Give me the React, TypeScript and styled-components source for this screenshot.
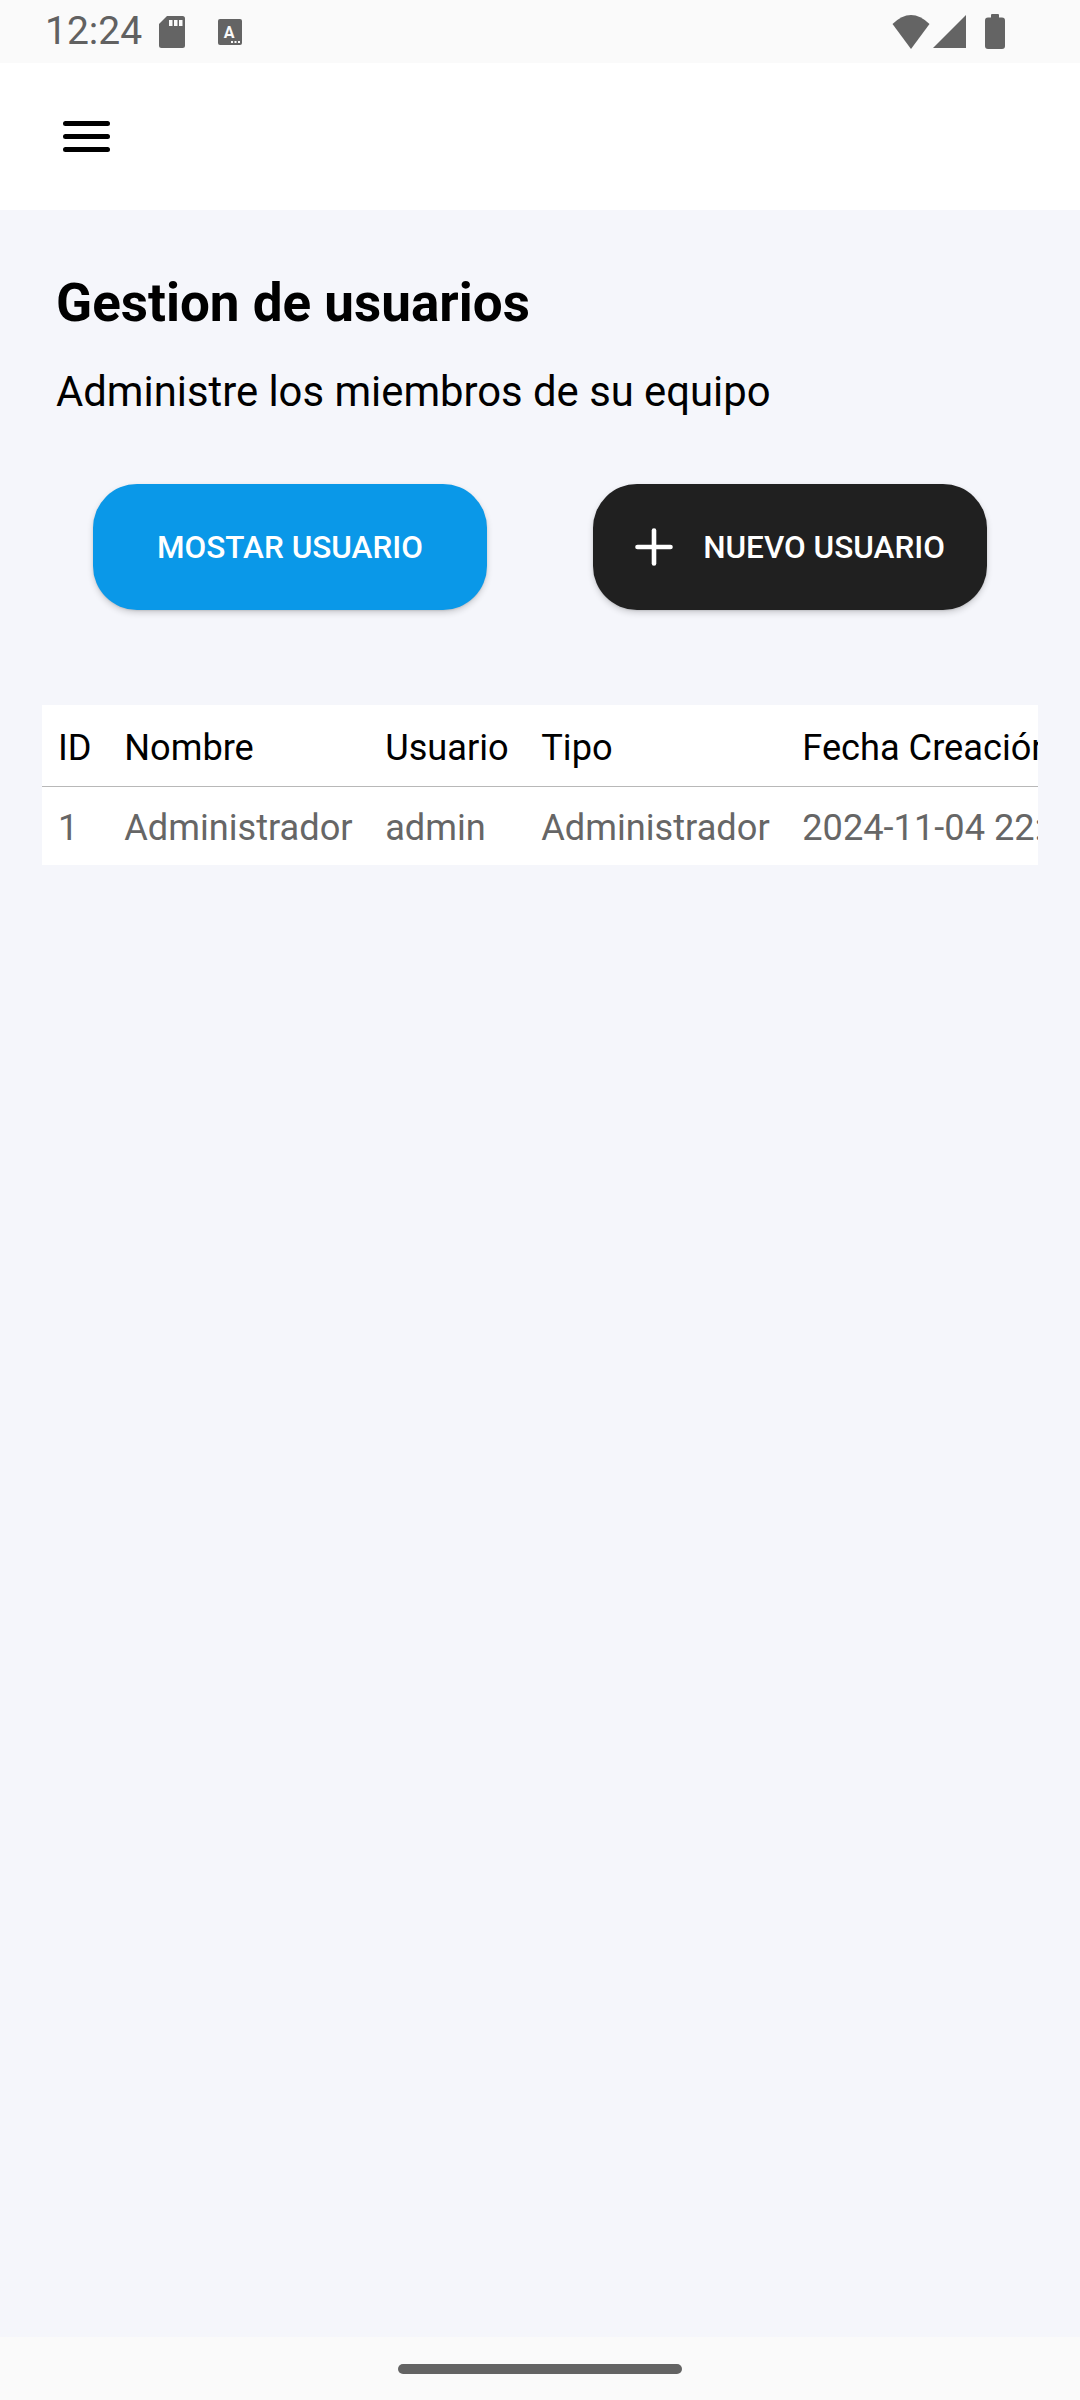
import React from "react";
import styled, { createGlobalStyle } from "styled-components";

const GlobalStyle = createGlobalStyle`
  html, body {
    margin: 0;
    padding: 0;
    background: #f5f6fb;
    font-family: Roboto, "Noto Sans", sans-serif;
  }
  * { box-sizing: border-box; }
`;

const Screen = styled.div`
  display: flex;
  flex-direction: column;
  height: 100vh;
  min-height: 2400px;
  background: #f5f6fb;
`;

const StatusBar = styled.div`
  height: 63px;
  flex: none;
  background: #fafafa;
  display: flex;
  align-items: center;
  padding: 0 75px 0 45px;
  color: #646464;
`;

const Time = styled.span`
  font-family: Roboto, sans-serif;
  font-size: 39px;
  line-height: 1;
  color: #616161;
  margin-right: 17px;
`;

const StatusLeft = styled.div`
  display: flex;
  align-items: center;
`;

const StatusRight = styled.div`
  margin-left: auto;
  display: flex;
  align-items: center;
  gap: 3px;
`;

const StatusIcon = styled.svg<{ $ml?: number }>`
  display: block;
  fill: #646464;
  margin-left: ${(p) => p.$ml ?? 0}px;
`;

const AppBar = styled.header`
  height: 147px;
  flex: none;
  background: #ffffff;
  display: flex;
  align-items: center;
  padding-left: 63px;
`;

const MenuButton = styled.button`
  border: 0;
  background: transparent;
  padding: 0;
  display: flex;
  cursor: pointer;
`;

const Main = styled.main`
  flex: 1;
  display: flex;
  flex-direction: column;
  padding: 61px 42px 0;
`;

const Title = styled.h1`
  margin: 0 0 0 14px;
  font-family: Roboto, sans-serif;
  font-weight: 700;
  font-size: 53px;
  line-height: 64px;
  color: #000;
`;

const Subtitle = styled.p`
  margin: 32px 0 0 14px;
  font-family: Roboto, sans-serif;
  font-weight: 400;
  font-size: 41.8px;
  line-height: 50px;
  color: #000;
`;

const ButtonRow = styled.div`
  display: flex;
  margin: 67px -2px 0;
`;

const ButtonCell = styled.div`
  flex: 1;
  display: flex;
  justify-content: center;
`;

const ActionButton = styled.button<{ $variant: "primary" | "dark" }>`
  width: 394px;
  height: 126px;
  border: 0;
  border-radius: 44px;
  background: ${(p) => (p.$variant === "primary" ? "#0a98e8" : "#202020")};
  color: #fff;
  display: flex;
  align-items: center;
  justify-content: center;
  gap: 30px;
  font-family: Roboto, sans-serif;
  font-weight: 500;
  font-size: 31.5px;
  letter-spacing: 0;
  text-transform: uppercase;
  box-shadow: 0 3px 6px rgba(0, 0, 0, 0.16), 0 1px 2px rgba(0, 0, 0, 0.1);
  cursor: pointer;
`;

const TableWrap = styled.div`
  margin-top: 95px;
  background: #ffffff;
  overflow: hidden;
`;

const Table = styled.table`
  border-collapse: collapse;
  white-space: nowrap;
  font-family: Roboto, sans-serif;
  font-size: 36.2px;
`;

const HeadCell = styled.th`
  height: 81px;
  padding: 4px 16.3px 0;
  text-align: left;
  font-weight: 400;
  color: #000;
  border-bottom: 1.5px solid #b8b8b8;
  &:first-child { padding-left: 16px; }
`;

const Cell = styled.td`
  height: 79px;
  padding: 3px 16.3px 0;
  color: #666666;
  &:first-child { padding-left: 16px; }
`;

const NavBar = styled.div`
  height: 63px;
  flex: none;
  background: #fafafa;
  display: flex;
  align-items: center;
  justify-content: center;
`;

const Handle = styled.div`
  width: 284px;
  height: 10px;
  border-radius: 5px;
  background: #636363;
`;

const columns = ["ID", "Nombre", "Usuario", "Tipo", "Fecha Creación"];
const rows = [["1", "Administrador", "admin", "Administrador", "2024-11-04 22:15:08"]];

export default function App() {
  return (
    <>
      <GlobalStyle />
      <Screen>
        <StatusBar>
          <StatusLeft>
            <Time>12:24</Time>
            <StatusIcon width="26" height="32" viewBox="0 0 26 32">
              <path d="M8 0H23.5A2.5 2.5 0 0 1 26 2.5V29.5A2.5 2.5 0 0 1 23.5 32H2.5A2.5 2.5 0 0 1 0 29.5V8Z" />
              <rect x="10" y="4" width="3.5" height="6" fill="#fafafa" />
              <rect x="15" y="4" width="3.5" height="6" fill="#fafafa" />
              <rect x="20" y="4" width="3.5" height="6" fill="#fafafa" />
            </StatusIcon>
            <StatusIcon $ml={33} width="24" height="26" viewBox="0 0 24 26">
              <rect x="0" y="0" width="24" height="26" rx="2" />
              <text x="11" y="19" textAnchor="middle" fontFamily="Roboto, sans-serif" fontWeight="700" fontSize="16" fill="#fafafa">A</text>
              <rect x="13" y="22" width="2" height="2" fill="#fafafa" />
              <rect x="16.5" y="22" width="2" height="2" fill="#fafafa" />
              <rect x="20" y="22" width="2" height="2" fill="#fafafa" />
            </StatusIcon>
          </StatusLeft>
          <StatusRight>
            <StatusIcon width="38" height="34" viewBox="0 0 38 34">
              <path d="M19 34L0.5 9Q19 -9 37.5 9Z" />
            </StatusIcon>
            <StatusIcon width="33" height="33" viewBox="0 0 33 33">
              <path d="M0 33H33V0Z" />
            </StatusIcon>
            <StatusIcon $ml={16} width="20" height="35" viewBox="0 0 20 35">
              <rect x="6" y="0" width="8" height="5" rx="1" />
              <rect x="0" y="3.5" width="20" height="31.5" rx="3" />
            </StatusIcon>
          </StatusRight>
        </StatusBar>

        <AppBar>
          <MenuButton aria-label="Menu">
            <svg width="47" height="31" viewBox="0 0 47 31">
              <g stroke="#000" strokeWidth="5" strokeLinecap="round">
                <line x1="2.5" y1="2.5" x2="44.5" y2="2.5" />
                <line x1="2.5" y1="15.5" x2="44.5" y2="15.5" />
                <line x1="2.5" y1="28.5" x2="44.5" y2="28.5" />
              </g>
            </svg>
          </MenuButton>
        </AppBar>

        <Main>
          <Title>Gestion de usuarios</Title>
          <Subtitle>Administre los miembros de su equipo</Subtitle>

          <ButtonRow>
            <ButtonCell>
              <ActionButton $variant="primary">Mostar usuario</ActionButton>
            </ButtonCell>
            <ButtonCell>
              <ActionButton $variant="dark">
                <svg width="38" height="38" viewBox="0 0 38 38">
                  <g stroke="#fff" strokeWidth="4.6" strokeLinecap="round">
                    <line x1="19" y1="2.5" x2="19" y2="35.5" />
                    <line x1="2.5" y1="19" x2="35.5" y2="19" />
                  </g>
                </svg>
                Nuevo usuario
              </ActionButton>
            </ButtonCell>
          </ButtonRow>

          <TableWrap>
            <Table>
              <thead>
                <tr>
                  {columns.map((c) => (
                    <HeadCell key={c}>{c}</HeadCell>
                  ))}
                </tr>
              </thead>
              <tbody>
                {rows.map((r, i) => (
                  <tr key={i}>
                    {r.map((v, j) => (
                      <Cell key={j}>{v}</Cell>
                    ))}
                  </tr>
                ))}
              </tbody>
            </Table>
          </TableWrap>
        </Main>

        <NavBar>
          <Handle />
        </NavBar>
      </Screen>
    </>
  );
}
